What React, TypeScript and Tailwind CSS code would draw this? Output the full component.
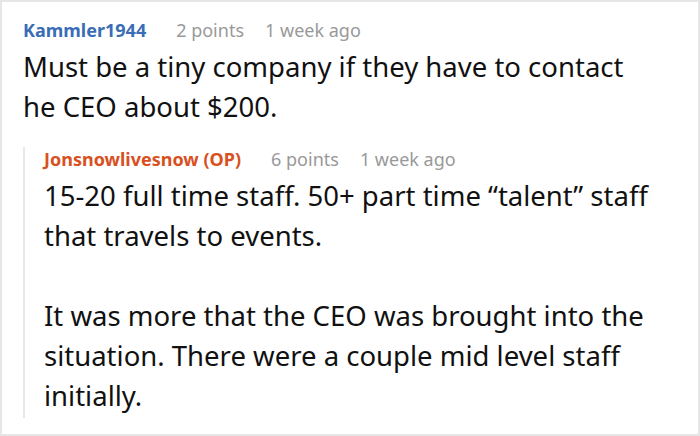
import React from 'react';

type CommentProps = {
  author: string;
  authorClass: string;
  points: string;
  age: string;
  children: React.ReactNode;
};

const Comment: React.FC<CommentProps> = ({ author, authorClass, points, age, children }) => {
  return (
    <div>
      <div className="flex items-baseline text-[18px] leading-[24px]">
        <span className={`font-bold ${authorClass}`}>{author}</span>
        <span className="ml-[30px] text-[#999999]">{points}</span>
        <span className="ml-[21px] text-[#999999]">{age}</span>
      </div>
      <div className="mt-[5px] text-[27.5px] leading-[40px] text-[#111111]">{children}</div>
    </div>
  );
};

export default function App() {
  return (
    <div
      className="w-[700px] h-[436px] bg-white border-2 border-[#e6e6e6] overflow-hidden"
      style={{ fontFamily: '"Noto Sans", sans-serif' }}
    >
      <div className="pl-[21px] pt-[16px]">
        <Comment author="Kammler1944" authorClass="text-[#3a6db6]" points="2 points" age="1 week ago">
          <p>Must be a tiny company if they have to contact</p>
          <p>he CEO about $200.</p>
        </Comment>
        <div className="mt-[20px] border-l-2 border-[#e8e8e8] pl-[19px] pb-[2px]">
          <Comment
            author="Jonsnowlivesnow (OP)"
            authorClass="text-[#d9501f]"
            points="6 points"
            age="1 week ago"
          >
            <p>15-20 full time staff. 50+ part time “talent” staff</p>
            <p>that travels to events.</p>
            <p>&nbsp;</p>
            <p>It was more that the CEO was brought into the</p>
            <p>situation. There were a couple mid level staff</p>
            <p>initially.</p>
          </Comment>
        </div>
      </div>
    </div>
  );
}
